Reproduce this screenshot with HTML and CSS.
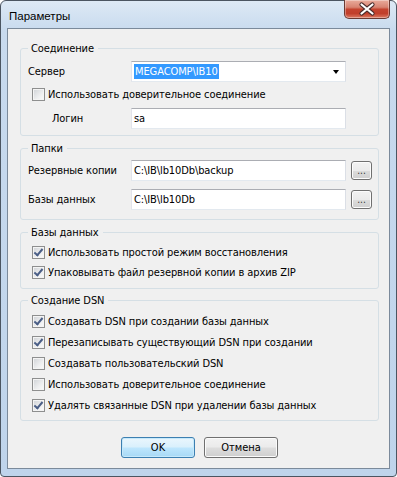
FILE: index.html
```html
<!DOCTYPE html>
<html lang="ru">
<head>
    <meta charset="UTF-8">
    <title>Параметры</title>
    <link rel="stylesheet" href="styles.css">
</head>
<body>
    <div class="window">
        <div class="titlebar">
            <span class="title">Параметры</span>
            <button class="close" title="Закрыть">
                <svg width="44" height="18" viewBox="0 0 44 18">
                    <path d="M16.5 4.5 L27.5 13.5 M27.5 4.5 L16.5 13.5" stroke="#4a2b2b" stroke-width="4.2" stroke-linecap="round"/>
                    <path d="M16.5 4.5 L27.5 13.5 M27.5 4.5 L16.5 13.5" stroke="#fff" stroke-width="2.2" stroke-linecap="round"/>
                </svg>
            </button>
        </div>
        <div class="client">
            <fieldset class="group group-conn">
                <legend>Соединение</legend>
                <div class="row">
                    <span class="lbl">Сервер</span>
                    <div class="combo">
                        <span class="sel">MEGACOMP\IB10</span>
                        <span class="arrow"></span>
                    </div>
                </div>
                <label class="check check-trust"><span class="box"></span>Использовать доверительное соединение</label>
                <div class="row row-login">
                    <span class="lbl lbl-indent">Логин</span>
                    <div class="field">sa</div>
                </div>
            </fieldset>

            <fieldset class="group group-dirs">
                <legend>Папки</legend>
                <div class="row">
                    <span class="lbl">Резервные копии</span>
                    <div class="field">C:\IB\lb10Db\backup</div>
                    <button class="browse">...</button>
                </div>
                <div class="row row-second">
                    <span class="lbl">Базы данных</span>
                    <div class="field">C:\IB\lb10Db</div>
                    <button class="browse">...</button>
                </div>
            </fieldset>

            <fieldset class="group group-db">
                <legend>Базы данных</legend>
                <div class="checks">
                    <label class="check"><span class="box checked"></span>Использовать простой режим восстановления</label>
                    <label class="check"><span class="box checked"></span>Упаковывать файл резервной копии в архив ZIP</label>
                </div>
            </fieldset>

            <fieldset class="group group-dsn">
                <legend>Создание DSN</legend>
                <div class="checks checks-wide">
                    <label class="check"><span class="box checked"></span>Создавать DSN при создании базы данных</label>
                    <label class="check"><span class="box checked"></span>Перезаписывать существующий DSN при создании</label>
                    <label class="check"><span class="box"></span>Создавать пользовательский DSN</label>
                    <label class="check"><span class="box"></span>Использовать доверительное соединение</label>
                    <label class="check"><span class="box checked"></span>Удалять связанные DSN при удалении базы данных</label>
                </div>
            </fieldset>

            <div class="actions">
                <button class="btn btn-default">OK</button>
                <button class="btn">Отмена</button>
            </div>
        </div>
    </div>
</body>
</html>
```

FILE: styles.css
```css
* {
    box-sizing: border-box;
}
body {
    margin: 0;
    background: #fff;
    font-family: 'DejaVu Sans Condensed', 'DejaVu Sans', sans-serif;
    font-stretch: condensed;
    font-size: 11px;
    letter-spacing: -0.1px;
    color: #000;
}
.window {
    width: 397px;
    border: 1px solid #4b5561;
    border-radius: 6px 6px 4px 4px;
    padding: 0 6px 7px 6px;
    background: linear-gradient(to bottom, #dde9f5 0, #c8daee 30px, #bfd4eb 100%);
}
.titlebar {
    height: 27px;
    display: flex;
    justify-content: space-between;
    align-items: flex-start;
}
.title {
    padding: 8px 0 0 2px;
    font-family: 'Liberation Sans', Arial, sans-serif;
    font-stretch: normal;
    font-size: 11.5px;
    letter-spacing: 0;
    line-height: 15px;
}
.close {
    margin-top: -1px;
    width: 46px;
    height: 19px;
    padding: 0;
    border: 1px solid #6a3a33;
    border-top: none;
    border-radius: 0 0 5px 5px;
    background: linear-gradient(to bottom, #e9ab9c 0, #d88472 40%, #c4432f 52%, #c13f2b 75%, #dc7a63 100%);
    box-shadow: inset 0 0 0 1px rgba(255, 255, 255, 0.35);
    display: flex;
    align-items: center;
    justify-content: center;
}
.client {
    border: 1px solid #7b8a9b;
    background: #f0f0f0;
    padding: 12px 10px 10px 12px;
}
.group {
    margin: 0;
    min-width: 0;
    border: 1px solid #d5dfe5;
    border-radius: 3px;
    padding: 5px 6px 6px 7px;
}
.group legend {
    padding: 0 4px 0 3px;
    line-height: 15px;
}
.group-dirs {
    margin-top: 5px;
    padding-top: 4px;
    padding-bottom: 9px;
}
.group-db {
    margin-top: 5px;
    padding-top: 4px;
    padding-bottom: 7px;
}
.group-dsn {
    margin-top: 4px;
    padding-top: 5px;
    padding-bottom: 6px;
}
.row {
    display: flex;
    align-items: center;
    height: 21px;
}
.row-second {
    margin-top: 8px;
}
.row-login {
    margin-top: 5px;
}
.lbl {
    width: 103px;
    flex: none;
}
.lbl-indent {
    padding-left: 24px;
}
.field,
.combo {
    width: 215px;
    height: 21px;
    flex: none;
    border: 1px solid;
    border-color: #abadb3 #dbdfe6 #e3e9ef #e2e3ea;
    background: #fff;
    padding: 0 2px;
    line-height: 19px;
    white-space: nowrap;
}
.combo {
    display: flex;
    align-items: center;
}
.sel {
    background: #3399ff;
    color: #fff;
    line-height: 15px;
    padding: 0 1px;
}
.arrow {
    margin-left: auto;
    margin-right: 4px;
    border-top: 4px solid #000;
    border-left: 3.5px solid transparent;
    border-right: 3.5px solid transparent;
}
.browse {
    width: 21px;
    height: 19px;
    margin-left: 5px;
    padding: 0 0 3px 0;
    border: 1px solid #707070;
    border-radius: 3px;
    background: linear-gradient(to bottom, #f2f2f2 0, #ebebeb 50%, #dddddd 50%, #cfcfcf 100%);
    box-shadow: inset 0 0 0 1px #fcfcfc;
    font-family: inherit;
    font-size: 10px;
    line-height: 10px;
    color: #333;
    display: flex;
    align-items: flex-end;
    justify-content: center;
}
.check {
    display: flex;
    align-items: center;
    height: 17px;
    white-space: nowrap;
}
.check-trust {
    margin-top: 4px;
}
.checks {
    display: flex;
    flex-direction: column;
    gap: 3px;
}
.checks-wide {
    gap: 4px;
}
.box {
    width: 13px;
    height: 13px;
    flex: none;
    margin: 0 3px 0 4px;
    border: 1px solid #8e8f8f;
    background: linear-gradient(135deg, #cfd2d6 0, #eeeff0 60%, #fbfbfb 100%);
    box-shadow: inset 0 0 0 1px #f4f4f4;
    position: relative;
}
.box.checked::after {
    content: '';
    position: absolute;
    left: 3px;
    top: 0px;
    width: 3px;
    height: 7px;
    border: solid #4a5e86;
    border-width: 0 2px 2px 0;
    transform: rotate(40deg);
}
.actions {
    display: flex;
    justify-content: center;
    gap: 9px;
    margin-top: 16px;
}
.btn {
    width: 74px;
    height: 21px;
    padding: 0;
    border: 1px solid #707070;
    border-radius: 3px;
    background: linear-gradient(to bottom, #f2f2f2 0, #ebebeb 48%, #dddddd 52%, #cfcfcf 100%);
    box-shadow: inset 0 0 0 1px #fbfbfb;
    font-family: inherit;
    font-size: 11px;
    color: #000;
}
.btn-default {
    border-color: #3c7fb1;
    background: linear-gradient(to bottom, #eaf6fd 0, #d9f0fc 48%, #bee6fd 52%, #a7d9f5 100%);
    box-shadow: inset 0 0 0 1px #c6e9fb;
}
```
